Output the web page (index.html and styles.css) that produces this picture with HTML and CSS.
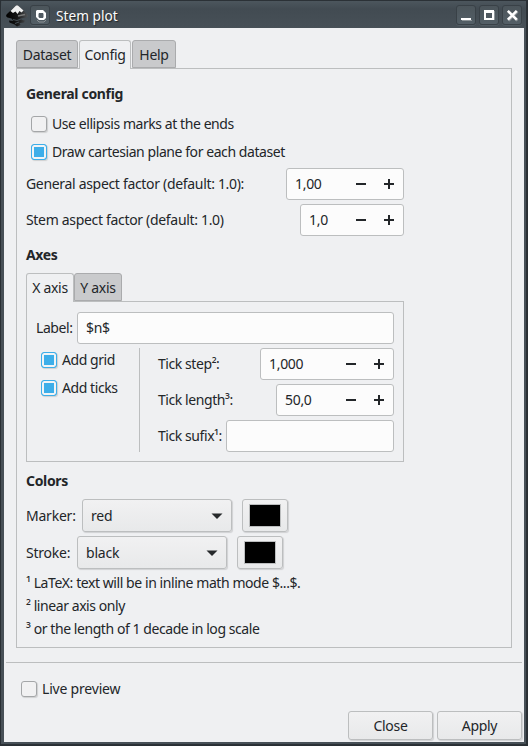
FILE: index.html
```html
<!DOCTYPE html>
<html lang="en">
<head>
<meta charset="utf-8">
<title>Stem plot</title>
<link rel="stylesheet" href="styles.css">
</head>
<body>
<div class="window">
  <header class="titlebar">
    <svg class="app-icon" width="24" height="24" viewBox="0 0 24 24">
      <defs><linearGradient id="ink" x1="0" y1="0" x2="1" y2="0"><stop offset="0" stop-color="#000"/><stop offset=".5" stop-color="#151515"/><stop offset="1" stop-color="#505356"/></linearGradient></defs>
      <path d="M10.500 2Q12 .5 13.500 2L22 10Q24 12.500 21 13.500L15.500 14.500L17 16L20 16.500L19 18.500L14.500 19L15.500 21L12 22.500L9.500 20.500L4.500 18.500L4 16.500L8.500 17L6.500 14.500L2.500 13.500Q0 12 2 10Z" fill="url(#ink)"/>
      <path d="M10.500 2Q12 .5 13.500 2L18.500 6.500L16.500 8.500L14.500 7L12.500 10L10.500 7.500L8 9L5.500 7Z" fill="#f0f0f0"/>
      <path d="M8 15.500L12 16.500L16 15M10 19.500L14 18" stroke="#465057" fill="none"/>
      <path d="M13 12L20 10.500" stroke="#777" stroke-width="1.500"/>
    </svg>
    <span class="tool tool-menu"><svg width="20" height="20" viewBox="0 0 20 20"><path d="M6 14L8 16H13L15 14" stroke="#8b9195" fill="none"/><path fill="#fff" fill-rule="evenodd" d="M5 5L6 4H12L13 5L15 7V12L13 14H8L5 11ZM8 7L7.500 8V11L8.500 12H12L12.500 11V8L12 7Z"/></svg></span>
    <span class="title">Stem plot</span>
    <span class="tool"><svg width="20" height="20" viewBox="0 0 20 20"><path fill="#8d9498" d="M5 14H15V15H5Z"/><path fill="#fff" d="M4 12H14V14H4Z"/></svg></span>
    <span class="tool"><svg width="20" height="20" viewBox="0 0 20 20"><path fill="#8d9498" d="M5 14H15V5H14V14Z"/><path fill="#fff" fill-rule="evenodd" d="M4 4H14V14H4ZM6 7V12H12V7Z"/></svg></span>
    <span class="tool"><svg width="20" height="20" viewBox="0 0 20 20"><path d="M5.500 5.500L14.500 14.500M14.500 5.500L5.500 14.500" stroke="#8d9498" stroke-width="2.600"/><path d="M4.800 4.800L13.700 13.700M13.700 4.800L4.800 13.700" stroke="#fff" stroke-width="2.500"/></svg></span>
  </header>
  <main class="client">
    <nav class="tabs">
      <span class="tab tab-dataset">Dataset</span><span class="tab tab-config active">Config</span><span class="tab tab-help">Help</span>
    </nav>
    <section class="panel">
      <h2 class="heading-general">General config</h2>
      <label class="check-row"><i class="check"></i>Use ellipsis marks at the ends</label>
      <label class="check-row"><i class="check on"></i>Draw cartesian plane for each dataset</label>
      <div class="field-row first"><span class="factor">General aspect factor (default: 1.0):</span><div class="field spin w118"><span>1,00</span><i class="minus"></i><i class="plus"></i></div></div>
      <div class="field-row"><span class="factor">Stem aspect factor (default: 1.0)</span><div class="field spin w104"><span>1,0</span><i class="minus"></i><i class="plus"></i></div></div>
      <h2 class="heading-axes">Axes</h2>
      <nav class="tabs inner-tabs"><span class="tab tab-axis active">X axis</span><span class="tab tab-axis">Y axis</span></nav>
      <section class="axis-panel">
        <div class="field-row label-row"><span>Label:</span><div class="field w317">$n$</div></div>
        <div class="axis-options">
          <div class="axis-checks">
            <label class="check-row"><i class="check on"></i>Add grid</label>
            <label class="check-row"><i class="check on"></i>Add ticks</label>
          </div>
          <div class="ticks">
            <div class="field-row"><span>Tick step²:</span><div class="field spin w134"><span>1,000</span><i class="minus"></i><i class="plus"></i></div></div>
            <div class="field-row"><span>Tick length³:</span><div class="field spin w118"><span>50,0</span><i class="minus"></i><i class="plus"></i></div></div>
            <div class="field-row"><span>Tick sufix¹:</span><div class="field w168"></div></div>
          </div>
        </div>
      </section>
      <h2 class="heading-colors">Colors</h2>
      <div class="color-row"><span class="marker">Marker:</span><div class="button select">red<svg width="12" height="6" viewBox="0 0 12 6"><path d="M.5 .5H11.500L6 6Z" fill="#26292b"/></svg></div><div class="button color"><i></i></div></div>
      <div class="color-row"><span class="stroke">Stroke:</span><div class="button select">black<svg width="12" height="6" viewBox="0 0 12 6"><path d="M.5 .5H11.500L6 6Z" fill="#26292b"/></svg></div><div class="button color"><i></i></div></div>
      <p>¹ LaTeX: text will be in inline math mode $...$.</p>
      <p>² linear axis only</p>
      <p>³ or the length of 1 decade in log scale</p>
    </section>
    <hr>
    <label class="check-row live"><i class="check"></i>Live preview</label>
    <footer><div class="button action">Close</div><div class="button action">Apply</div></footer>
  </main>
</div>
</body>
</html>
```
FILE: styles.css
```css
* { box-sizing: border-box; }
body { margin: 0; font: 14px/18px "Noto Sans", sans-serif; letter-spacing: -.43px; color: #232629; }
h2, p { margin: 0; font-size: inherit; white-space: nowrap; }
h2 { letter-spacing: -.33px; }
i { display: block; flex: none; }
svg { display: block; flex: none; }
.window { width: 528px; height: 746px; padding: 1px 3px 3px; background: #475057; border: solid #292f34; border-width: 0 1px 1px; overflow: hidden; box-shadow: inset 0 1px #2b3136, inset -1px -1px #2b3136; }
.titlebar { height: 27px; margin: 0 -2px; padding: 4px 4px 0 3px; display: flex; align-items: flex-start; gap: 3px; background: linear-gradient(#4c565d, #424b52 8px, #475057); color: #fcfcfc; }
.app-icon { margin: -1px -2px 0 0; }
.tool { width: 20px; height: 20px; border: 1px solid #394147; border-radius: 3px; background: linear-gradient(#4c555b, #535e66); box-shadow: 0 1px #515b62; }
.title { flex: 1; padding: 2px 0 0 3px; font-size: 13.7px; letter-spacing: 0; text-shadow: 1px 1px 1px #23282b; }
.client { height: 714px; background: #eff0f2; padding: 12px 2px 0; }
.tabs { display: flex; height: 28px; padding-left: 10px; gap: 1px; letter-spacing: -.3px; }
.tab { height: 28px; border: 1px solid #aaabad; border-radius: 3px 3px 0 0; background: #c9cacc; text-align: center; padding-top: 5px; }
.tab.active { background: #eff0f2; border-color: #bcbebf; border-bottom: 0; height: 29px; z-index: 1; }
.tab-dataset { width: 62px; }
.tab-config { width: 52px; }
.tab-help { width: 44px; }
.panel { width: 496px; height: 580px; margin-left: 10px; border: 1px solid #bcbebf; padding: 0 0 0 9px; }
.heading-general { margin: 16px 0 0; }
.check-row { display: flex; align-items: center; height: 28px; gap: 5px; padding-left: 5px; white-space: nowrap; }
.heading-general + .check-row { margin-top: 7px; }
.check { width: 16px; height: 16px; border: 1px solid #a4a6a8; border-radius: 3px; background: #f1f1f2; box-shadow: 1px 1px 1px #cfd0d1; }
.check.on { border-color: #3daee9; background: #3daee9; box-shadow: inset 0 0 0 2px #f1f4f6, 1px 1px 1px #cfd0d1; }
.field-row { width: 378px; height: 32px; display: flex; align-items: center; justify-content: space-between; margin-bottom: 4px; white-space: nowrap; }
.field-row.first { margin-top: 2px; }
.factor { letter-spacing: -.32px; }
.field { height: 32px; border: 1px solid #bcbebf; border-radius: 3px; background: #fcfcfc; padding: 6px 8px; letter-spacing: -.3px; }
.spin { display: grid; grid-template-columns: 1fr 28px 28px; align-items: center; padding: 0 0 0 8px; }
.minus, .plus { width: 10px; height: 10px; margin-left: 9px; background: linear-gradient(#232629, #232629) center / 10px 2px no-repeat; }
.plus { background: linear-gradient(#232629, #232629) center / 10px 2px no-repeat, linear-gradient(#232629, #232629) center / 2px 10px no-repeat; }
.w104 { width: 104px; }
.w118 { width: 118px; }
.w134 { width: 134px; }
.w168 { width: 168px; }
.w317 { width: 317px; }
.heading-axes { margin: 10px 0 9px; }
.inner-tabs { padding: 0; gap: 0; }
.tab-axis { width: 48px; }
.axis-panel { width: 378px; height: 161px; border: 1px solid #bcbebf; padding: 10px 9px 9px; }
.axis-panel .field-row { width: auto; }
.axis-options { display: grid; grid-template-columns: 104px 1fr; grid-template-rows: 104px; height: 104px; }
.axis-checks { border-right: 1px solid #bcbebf; }
.axis-checks .check-row:first-child { height: 26px; padding-bottom: 2px; }
.ticks { padding-left: 18px; }
.heading-colors { margin: 10px 0 9px; }
.color-row { display: flex; height: 33px; align-items: center; margin-bottom: 4px; letter-spacing: -.22px; }
.marker { width: 56px; }
.stroke { width: 51px; }
.button { border: 1px solid #bcbebf; border-radius: 3px; background: linear-gradient(#f1f1f2, #e8e9ea); box-shadow: 1px 1px 1px #d0d1d3; }
.select { width: 150px; height: 33px; padding: 0 8px; display: flex; align-items: center; justify-content: space-between; }
.color { width: 46px; height: 33px; margin-left: 10px; padding: 4px 6px; }
.color i { width: 32px; height: 23px; background: #000; border: 1px solid #bcbebf; }
p { height: 23px; line-height: 23px; }
.color-row + p { margin-top: -2px; }
hr { height: 1px; border: 0; background: #bcbebf; margin: 14px 0 0; }
.live { margin-top: 12px; padding-left: 15px; letter-spacing: -.2px; }
footer { display: flex; justify-content: flex-end; gap: 4px; margin-top: 8px; letter-spacing: -.3px; }
.action { width: 85px; height: 29px; text-align: center; padding-top: 5px; }
```
